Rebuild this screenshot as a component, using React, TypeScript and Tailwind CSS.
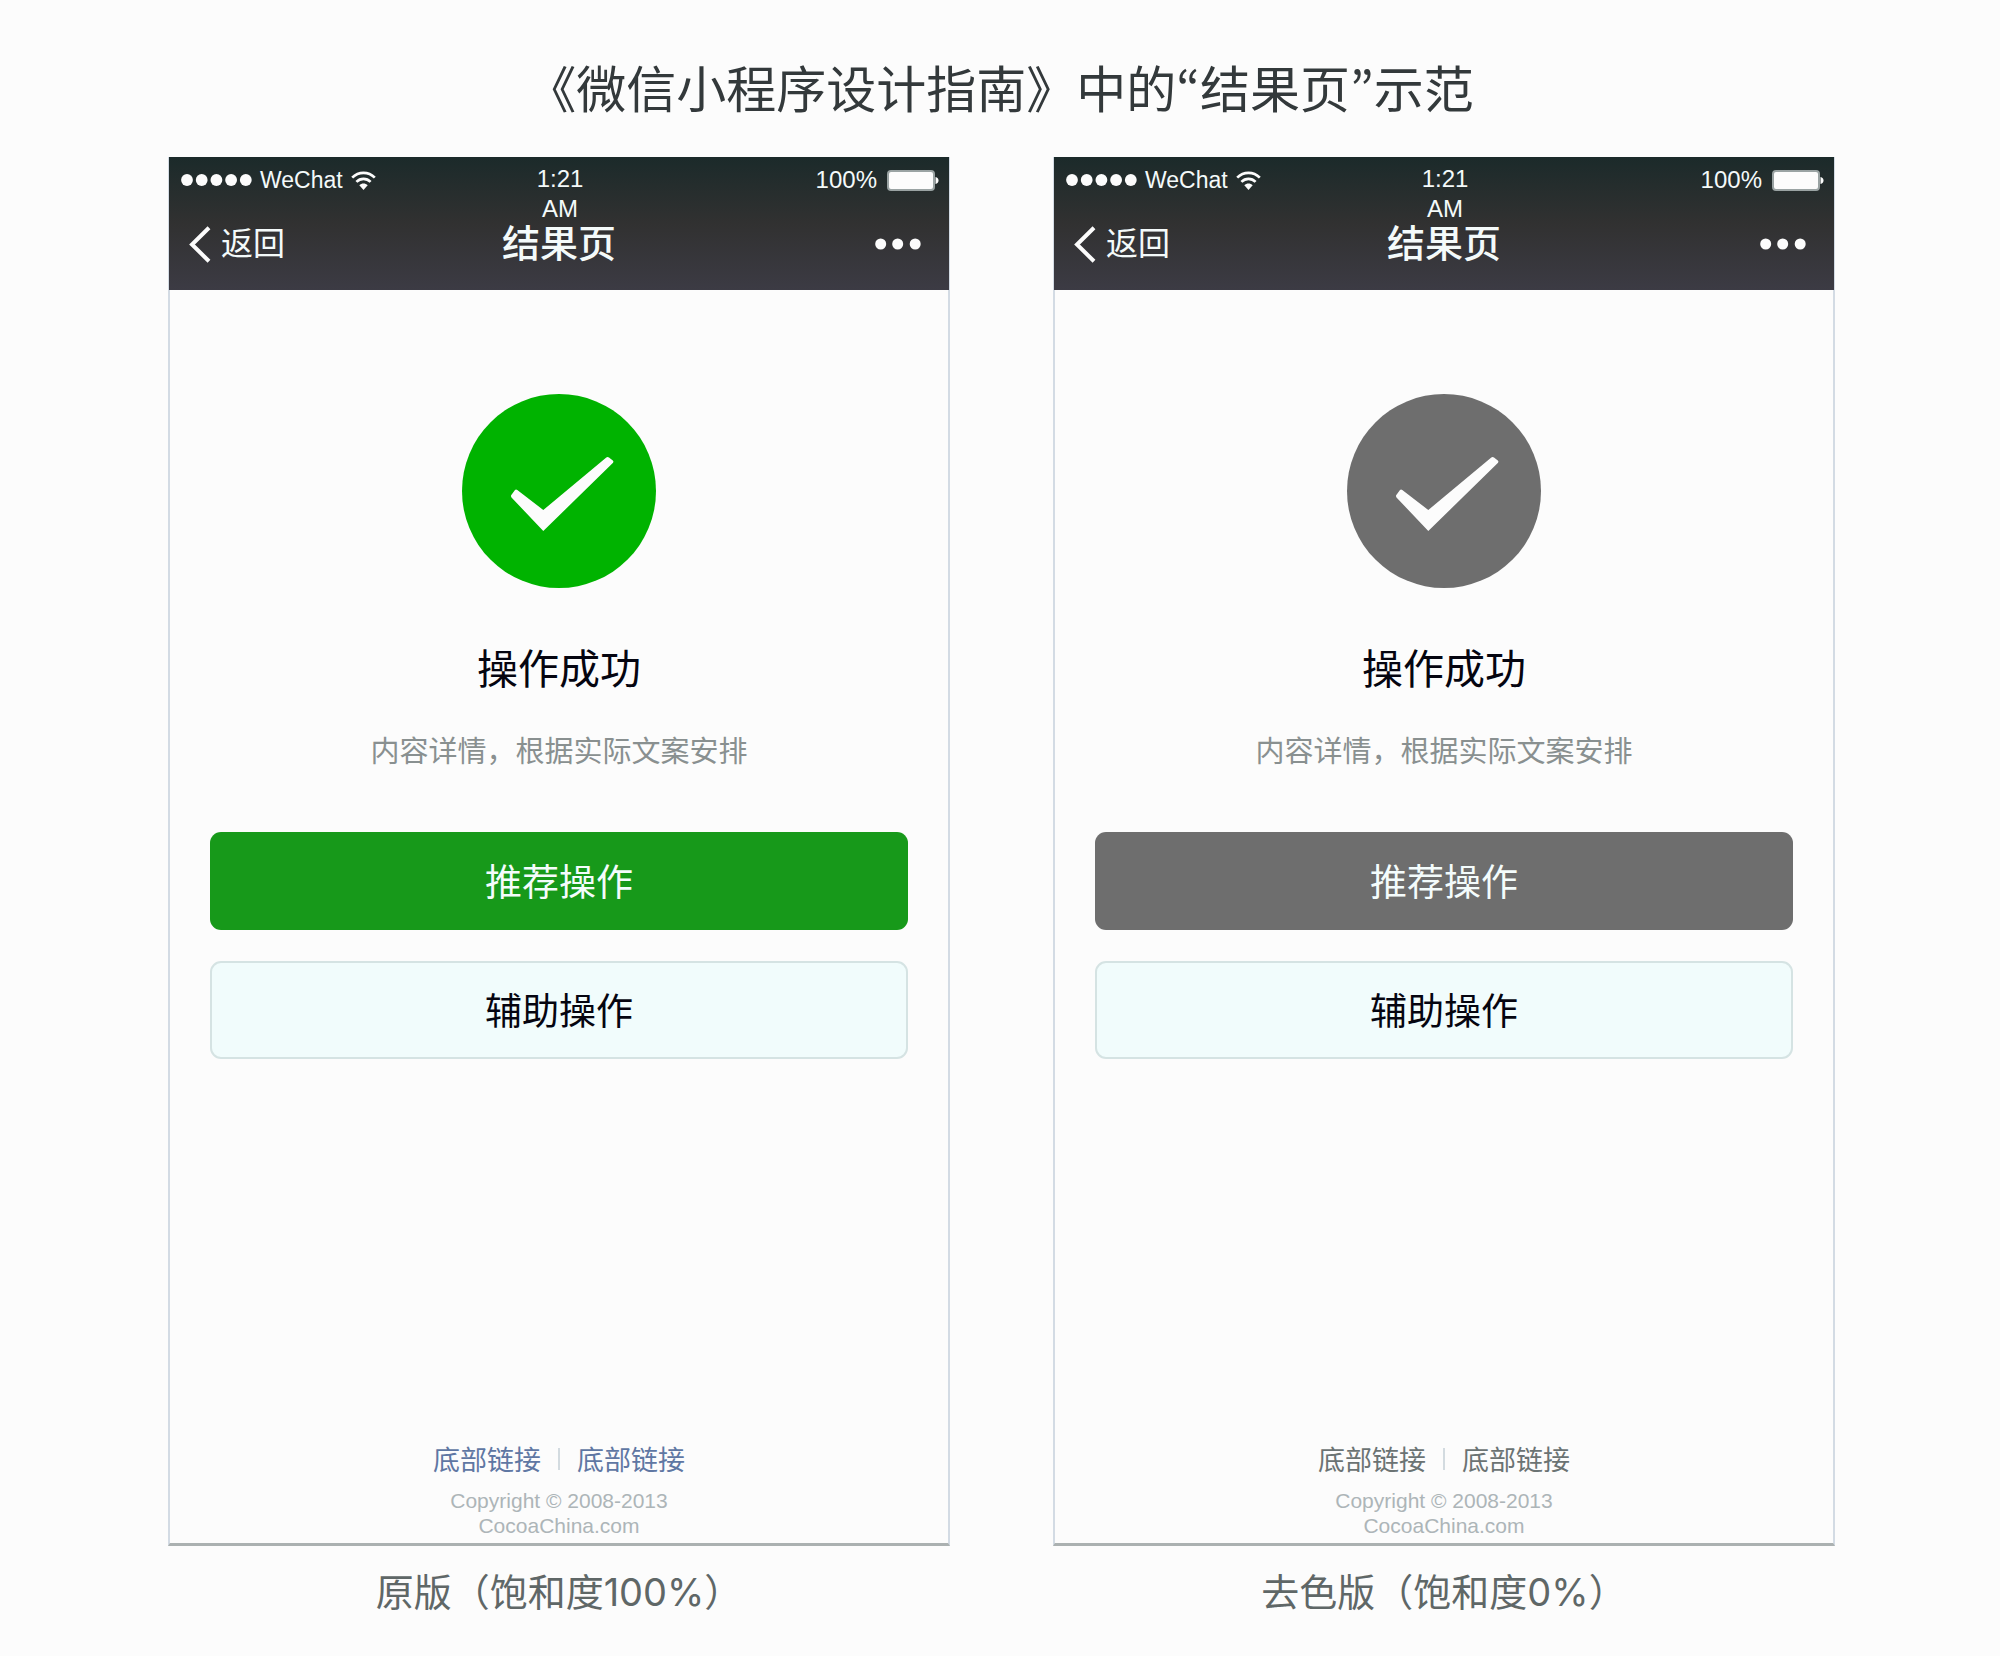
import clsx from 'clsx'

// ============================================
// ICONS
// ============================================
function WifiIcon() {
  return (
    <svg viewBox="0 0 25 19" className="h-[19px] w-[25px]" fill="none" aria-hidden="true">
      <path d="M1.2 6.6C7.6.2 17.4.2 23.8 6.6" stroke="#fcfcfc" strokeWidth="2.7" />
      <path d="M5.4 10.9c4-4 10.2-4 14.2 0" stroke="#fcfcfc" strokeWidth="2.7" />
      <path d="M8.3 14.3c2.4-2.3 6-2.3 8.4 0L12.5 19z" fill="#fcfcfc" />
    </svg>
  )
}

function BatteryIcon() {
  return (
    <svg viewBox="0 0 52 21" className="h-[21px] w-[52px]" aria-hidden="true">
      <rect x="1" y="1" width="46" height="19" rx="3" fill="#fcfcfc" stroke="#9aa3a3" strokeWidth="2" />
      <path d="M48.5 7c2 .6 3 1.8 3 3.5s-1 2.900-3 3.500z" fill="#fcfcfc" />
    </svg>
  )
}

function BackIcon() {
  return (
    <svg viewBox="0 0 22 37" className="h-[37px] w-[22px]" fill="none" aria-hidden="true">
      <path d="M20 1.8 3 18.5 20 35.2" stroke="#fcfcfc" strokeWidth="4" />
    </svg>
  )
}

function MoreIcon() {
  return (
    <svg viewBox="0 0 46 12" className="h-3 w-[46px]" fill="#fcfcfc" aria-hidden="true">
      <circle cx="5.7" cy="6" r="5.5" />
      <circle cx="22.7" cy="6" r="5.5" />
      <circle cx="40.2" cy="6" r="5.5" />
    </svg>
  )
}

function SuccessIcon({ gray }: { gray: boolean }) {
  return (
    <svg viewBox="0 0 194 194" className="size-[194px]" aria-hidden="true">
      <circle cx="97" cy="97" r="97" fill={gray ? '#6e6e6e' : '#00b300'} />
      <path
        d="M49.5 103.5Q48.5 102 49.5 100.8L53 96Q54 95 55.3 96L81.3 116 144 63.8Q145.5 62.3 147 63.6L150.8 66.6Q152 67.8 150.8 69L81.3 137z"
        fill="#fcfcfc"
      />
    </svg>
  )
}

// ============================================
// PHONE SCREEN
// ============================================
interface PhoneProps {
  caption: string
  gray?: boolean
}

function Phone({ caption, gray = false }: PhoneProps) {
  return (
    <figure className="flex flex-col">
      <div className="border-x-2 border-b-3 border-x-[#d3dbe4] border-b-[#abb1b1]">
        <header className="-mx-px bg-linear-to-b from-[#1b2a2a] via-[#313131] to-[#3c3b44] pt-[7px] pb-[26px] text-[#f4fafa]">
          <div className="grid grid-cols-3 items-start pr-[10px] pl-3 text-2xl leading-[30px]">
            <div className="flex items-center gap-2">
              <svg viewBox="0 0 71 12" className="h-3 w-[71px]" fill="#fcfcfc" aria-hidden="true">
                {[0, 1, 2, 3, 4].map((i) => (
                  <circle key={i} cx={6 + i * 14.7} cy="6" r="5.9" />
                ))}
              </svg>
              <span className="text-[23px] leading-8">WeChat</span>
              <WifiIcon />
            </div>
            <p className="text-center">
              1:21
              <br />
              AM
            </p>
            <div className="flex items-center justify-end gap-[10px]">
              <span className="leading-8">100%</span>
              <BatteryIcon />
            </div>
          </div>

          <nav className="grid h-10 grid-cols-3 items-center px-5">
            <button type="button" className="flex items-center gap-[10px] text-[32px] leading-10">
              <BackIcon />
              返回
            </button>
            <h2 className="text-center text-[38px] leading-10 font-medium">结果页</h2>
            <button type="button" aria-label="更多" className="justify-self-end pr-2">
              <MoreIcon />
            </button>
          </nav>
        </header>

        <main className="flex flex-col items-center px-10 pt-[104px]">
          <SuccessIcon gray={gray} />
          <h3 className="mt-[52px] text-[41px] leading-[60px] text-[#050510]">操作成功</h3>
          <p className="mt-8 text-[29px] leading-10 text-[#899090]">
            内容详情，根据实际文案安排
          </p>
          <button
            type="button"
            className={clsx(
              "mt-[60px] h-[98px] w-full rounded-[11px] font-['Noto_Sans_CJK_SC',sans-serif] text-[37px] text-[#f4fcfc]",
              gray ? 'bg-[#6e6e6e]' : 'bg-[#17991a]',
            )}
          >
            推荐操作
          </button>
          <button
            type="button"
            className="mt-[31px] h-[98px] w-full rounded-[11px] border-2 border-[#d5e3e3] bg-[#f1fcfc] font-['Noto_Sans_CJK_SC',sans-serif] text-[37px] text-[#050510]"
          >
            辅助操作
          </button>
        </main>

        <footer className="mt-[380px] pb-[5px] text-center">
          <div
            className={clsx(
              "flex items-center justify-center gap-[17px] font-['Noto_Sans_CJK_SC',sans-serif] text-[27px] leading-10",
              gray ? 'text-[#6b7373]' : 'text-[#5f77a3]',
            )}
          >
            <a href="#">底部链接</a>
            <span className="h-[22px] w-0.5 bg-[#d3dbe0]" />
            <a href="#">底部链接</a>
          </div>
          <p className="mt-[9px] text-[21px] leading-[25px] text-[#adb5b8]">
            Copyright © 2008-2013
            <br />
            CocoaChina.com
          </p>
        </footer>
      </div>
      <figcaption className="mt-[18px] text-center font-['Inter','Noto_Sans_CJK_SC',sans-serif] text-[38px] leading-[56px] text-[#5f6767]">
        {caption}
      </figcaption>
    </figure>
  )
}

export default function App() {
  return (
    <div className="min-h-screen bg-[#fcfcfc] pt-[50px] pb-8 font-['Liberation_Sans','Noto_Sans_CJK_SC',sans-serif]">
      <h1 className="text-center font-['Noto_Sans_CJK_SC',sans-serif] text-[50px] leading-[72px] text-[#33393b]">
        《微信小程序设计指南》中的
        <span className="font-['Noto_Sans_CJK_KR',sans-serif]">“</span>
        结果页
        <span className="font-['Noto_Sans_CJK_KR',sans-serif]">”</span>
        示范
      </h1>
      <div className="mt-[35px] grid grid-cols-2 gap-[103px] pr-[165px] pl-[168px]">
        <Phone caption="原版（饱和度100%）" />
        <Phone caption="去色版（饱和度0%）" gray />
      </div>
    </div>
  )
}
